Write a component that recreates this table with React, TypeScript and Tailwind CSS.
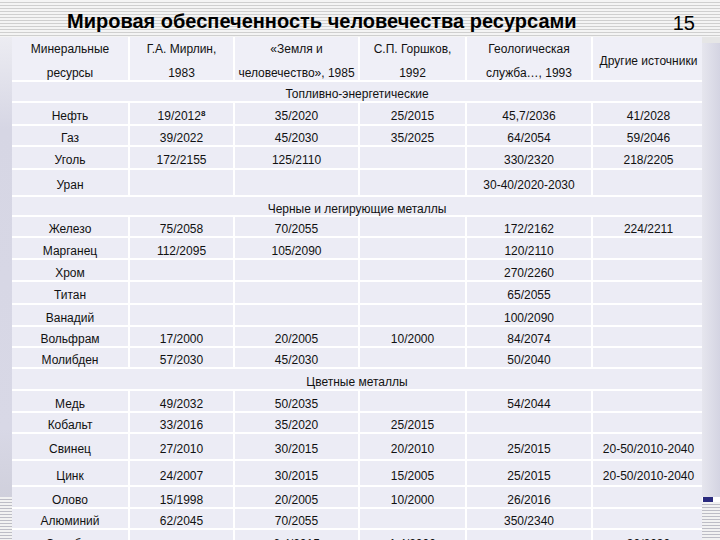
import React from "react";

type Row =
  | { kind: "section"; title: string; h: number }
  | { kind: "data"; cells: React.ReactNode[]; h: number };

const rows: Row[] = [
  { kind: "section", title: "Топливно-энергетические", h: 19 },
  { kind: "data", h: 21, cells: ["Нефть", <span key="n">19/2012<sup className="text-[8px] font-bold">8</sup></span>, "35/2020", "25/2015", "45,7/2036", "41/2028"] },
  { kind: "data", h: 19, cells: ["Газ", "39/2022", "45/2030", "35/2025", "64/2054", "59/2046"] },
  { kind: "data", h: 21, cells: ["Уголь", "172/2155", "125/2110", "", "330/2320", "218/2205"] },
  { kind: "data", h: 25, cells: ["Уран", "", "", "", "30-40/2020-2030", ""] },
  { kind: "section", title: "Черные и легирующие металлы", h: 18 },
  { kind: "data", h: 19, cells: ["Железо", "75/2058", "70/2055", "", "172/2162", "224/2211"] },
  { kind: "data", h: 20, cells: ["Марганец", "112/2095", "105/2090", "", "120/2110", ""] },
  { kind: "data", h: 20, cells: ["Хром", "", "", "", "270/2260", ""] },
  { kind: "data", h: 21, cells: ["Титан", "", "", "", "65/2055", ""] },
  { kind: "data", h: 20, cells: ["Ванадий", "", "", "", "100/2090", ""] },
  { kind: "data", h: 19, cells: ["Вольфрам", "17/2000", "20/2005", "10/2000", "84/2074", ""] },
  { kind: "data", h: 19, cells: ["Молибден", "57/2030", "45/2030", "", "50/2040", ""] },
  { kind: "section", title: "Цветные металлы", h: 20 },
  { kind: "data", h: 20, cells: ["Медь", "49/2032", "50/2035", "", "54/2044", ""] },
  { kind: "data", h: 19, cells: ["Кобальт", "33/2016", "35/2020", "25/2015", "", ""] },
  { kind: "data", h: 25, cells: ["Свинец", "27/2010", "30/2015", "20/2010", "25/2015", "20-50/2010-2040"] },
  { kind: "data", h: 24, cells: ["Цинк", "24/2007", "30/2015", "15/2005", "25/2015", "20-50/2010-2040"] },
  { kind: "data", h: 20, cells: ["Олово", "15/1998", "20/2005", "10/2000", "26/2016", ""] },
  { kind: "data", h: 19, cells: ["Алюминий", "62/2045", "70/2055", "", "350/2340", ""] },
  { kind: "data", h: 22, cells: ["Серебро", "", "6,4/2015", "1,4/2000", "", "30/2030"] },
];

const header = [
  ["Минеральные", "ресурсы"],
  ["Г.А. Мирлин,", "1983"],
  ["«Земля и", "человечество», 1985"],
  ["С.П. Горшков,", "1992"],
  ["Геологическая", "служба…, 1993"],
  ["Другие источники"],
];

const cols = "grid grid-cols-[116px_103px_123px_105px_124px_111px] gap-x-[2px] shrink-0 overflow-hidden";

export default function App() {
  return (
    <div className="relative w-[720px] h-[540px] overflow-hidden bg-white font-['Liberation_Sans',Arial,sans-serif] text-[#111]">
      <div className="h-[37px] flex items-center justify-between bg-[repeating-linear-gradient(180deg,#f4f4f4_0px,#f4f4f4_2px,#cfcfcf_2px,#cfcfcf_3px)]">
        <div className="ml-[67px] mt-[4px] text-[20px] font-bold leading-none text-black">
          Мировая обеспеченность человечества ресурсами
        </div>
        <div className="mr-[25px] mt-[8px] text-[20px] leading-none text-black">15</div>
      </div>
      <div className="flex h-[503px] overflow-hidden">
        <div className="w-[12px] shrink-0 flex flex-col">
          <div className="flex-1 bg-[linear-gradient(180deg,#ececf2_0%,#d6d6e4_20%,#d8d8e6_85%,#d0d0dc_100%)]" />
          <div className="h-[43px] shrink-0 bg-[repeating-linear-gradient(180deg,#f2f2f2_0px,#f2f2f2_2px,#bdbdc6_2px,#bdbdc6_3px)]" />
        </div>
        <div className="w-[690px] shrink-0 flex flex-col gap-y-[2px] bg-white">
          <div className={`${cols} h-[43px]`}>
            {header.map((h, i) => (
              <div key={i} className="bg-[#efeff7] flex flex-col items-center justify-center text-[12px] leading-[24px] whitespace-nowrap">
                {h.map((l, j) => (
                  <span key={j}>{l}</span>
                ))}
              </div>
            ))}
          </div>
          {rows.map((r, i) =>
            r.kind === "section" ? (
              <div key={i} style={{ height: r.h }} className="shrink-0 bg-[#ececf5] flex items-center justify-center text-[12px] leading-[14px] pt-[5px]">
                {r.title}
              </div>
            ) : (
              <div key={i} style={{ height: r.h }} className={cols}>
                {r.cells.map((c, j) => (
                  <div key={j} className="bg-[#ececf5] flex items-center justify-center text-[12px] leading-[14px] pt-[5px] whitespace-nowrap">
                    {c}
                  </div>
                ))}
              </div>
            )
          )}
        </div>
        <div className="w-[18px] shrink-0 flex flex-col">
          <div className="h-[6px] shrink-0 bg-[#e6e6e6]" />
          <div className="flex-1 bg-[linear-gradient(90deg,#e6e6ee_0%,#d4d4e2_100%)]" />
          <div className="h-[5px] shrink-0 flex">
            <div className="w-[10px] ml-[1px] bg-[#2b2b7e]" />
          </div>
          <div className="h-[38px] shrink-0 bg-[repeating-linear-gradient(180deg,#f2f2f2_0px,#f2f2f2_2px,#bdbdc6_2px,#bdbdc6_3px)]" />
        </div>
      </div>
    </div>
  );
}
